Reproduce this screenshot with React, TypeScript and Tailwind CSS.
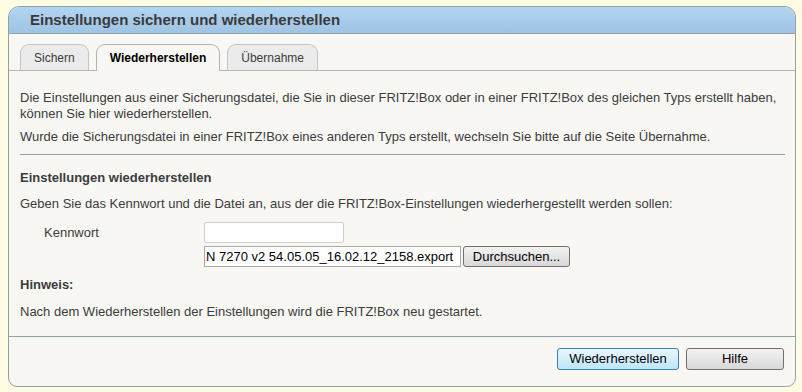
import { useState } from 'react'

const TABS = ['Sichern', 'Wiederherstellen', 'Übernahme']

function Tab({ label, active }: { label: string; active: boolean }) {
  return (
    <div
      className={
        active
          ? 'relative -mb-px flex h-[27px] items-center rounded-t-[9px] border border-b-0 border-[#b4b4b4] bg-[#f8f7f3] px-[13px] font-bold text-black'
          : 'flex h-[26px] items-center rounded-t-[9px] border border-b-0 border-[#c4c4c4] bg-[#ebebeb] px-[13px] text-[#3c3c3c]'
      }
    >
      {label}
    </div>
  )
}

export default function App() {
  const [active] = useState(1)
  return (
    <div
      className="h-[392px] w-[802px] bg-[#fefde4] pl-[8px] pr-[6px] pt-[6px] text-[13px] text-[#3c3c3c]"
      style={{ fontFamily: '"Liberation Sans", Arial, sans-serif' }}
    >
      <div className="flex h-[381px] flex-col rounded-t-[11px] rounded-b-[9px] border border-[#8fa3a3] bg-[#f8f7f3]">
        <div className="flex h-[27px] items-center rounded-t-[10px] border-b border-[#8fa3a3] bg-gradient-to-b from-[#b2d5f3] to-[#9fc3e2] pl-[21px] text-[15px] font-bold text-[#3a3a3a]">
          Einstellungen sichern und wiederherstellen
        </div>
        <div className="flex h-[37px] items-end gap-[7px] border-b border-[#b4b4b4] pl-[11px] text-[12px]">
          {TABS.map((t, i) => (
            <Tab key={t} label={t} active={i === active} />
          ))}
        </div>
        <div className="px-[11px] pt-[19px] leading-[16px]">
          <p>
            Die Einstellungen aus einer Sicherungsdatei, die Sie in dieser FRITZ!Box oder in einer FRITZ!Box des gleichen Typs erstellt haben,
            können Sie hier wiederherstellen.
          </p>
          <p className="mt-[7px]">
            Wurde die Sicherungsdatei in einer FRITZ!Box eines anderen Typs erstellt, wechseln Sie bitte auf die Seite Übernahme.
          </p>
          <div className="mr-[-1px] mt-[9px] border-t border-[#8fa3a3]" />
          <h2 className="mt-[15px] font-bold">Einstellungen wiederherstellen</h2>
          <p className="mt-[10px]">
            Geben Sie das Kennwort und die Datei an, aus der die FRITZ!Box-Einstellungen wiederhergestellt werden sollen:
          </p>
          <div className="mt-[10px] flex flex-col gap-[3px]">
            <div className="flex items-center">
              <span className="w-[184px] pl-[24px]">Kennwort</span>
              <input
                type="password"
                className="h-[21px] w-[140px] rounded-[2px] border border-[#cfcfcf] bg-white outline-none"
              />
            </div>
            <div className="flex items-center">
              <span className="w-[184px]" />
              <div className="flex h-[21px] w-[257px] items-center overflow-hidden border border-[#a9a9a9] bg-white px-[1px] text-black">
                <span className="whitespace-nowrap">N 7270 v2 54.05.05_16.02.12_2158.export</span>
              </div>
              <button className="ml-[2px] h-[21px] w-[107px] rounded-[3px] border border-[#707070] bg-gradient-to-b from-[#f2f2f2] to-[#d8d8d8] text-black">
                Durchsuchen...
              </button>
            </div>
          </div>
          <h2 className="mt-[10px] font-bold">Hinweis:</h2>
          <p className="mt-[11px]">Nach dem Wiederherstellen der Einstellungen wird die FRITZ!Box neu gestartet.</p>
        </div>
        <div className="mt-auto flex h-[50px] items-start justify-end gap-[7px] border-t border-[#8fa3a3] pr-[11px] pt-[11px]">
          <button className="h-[22px] w-[122px] rounded-[3px] border border-[#3c7fb1] bg-gradient-to-b from-[#eaf6fd] to-[#bee6fd] text-black">
            Wiederherstellen
          </button>
          <button className="h-[22px] w-[98px] rounded-[3px] border border-[#707070] bg-gradient-to-b from-[#f2f2f2] to-[#d8d8d8] text-black">
            Hilfe
          </button>
        </div>
      </div>
    </div>
  )
}
